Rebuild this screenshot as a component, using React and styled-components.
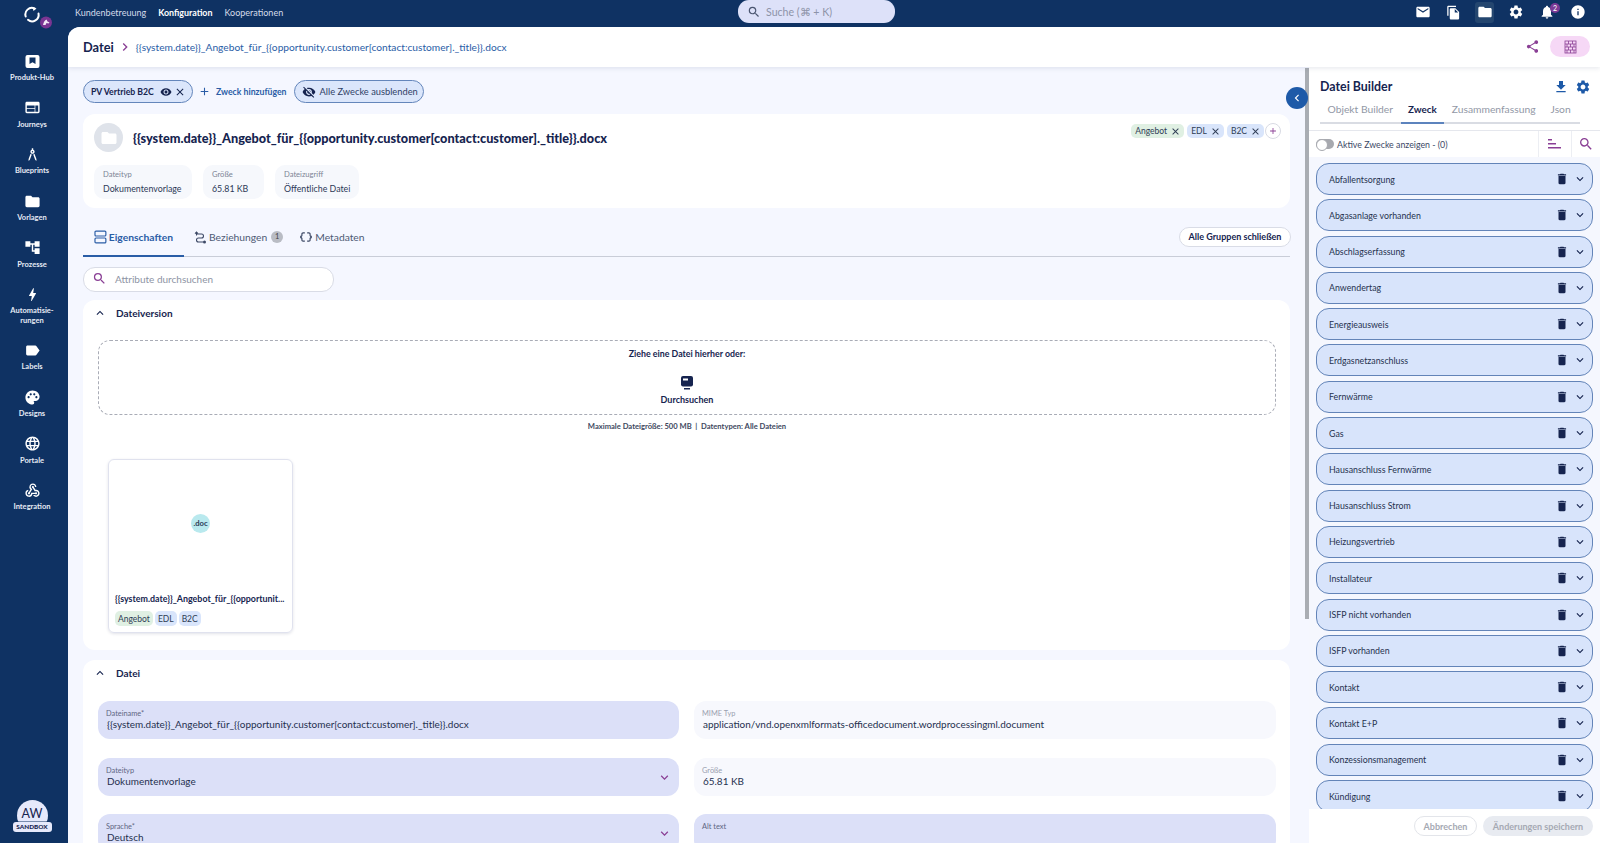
import React from "react";
import styled, { createGlobalStyle } from "styled-components";
import {
  MdAccountTree,
  MdAdd,
  MdArchitecture,
  MdBolt,
  MdClose,
  MdDataObject,
  MdDelete,
  MdEmail,
  MdExpandLess,
  MdExpandMore,
  MdFileCopy,
  MdFileDownload,
  MdFolder,
  MdInfo,
  MdLabel,
  MdLanguage,
  MdNotifications,
  MdPalette,
  MdSearch,
  MdSettings,
  MdShare,
  MdVisibility,
  MdVisibilityOff,
  MdWeb,
  MdWebhook,
  MdChevronLeft,
  MdChevronRight,
} from "react-icons/md";

const navy = "#0f3263";
const ink = "#16244f";
const blue = "#2a5da6";
const plum = "#8a3f95";

const GlobalStyle = createGlobalStyle`
  html, body { margin: 0; height: 100%; overflow: hidden; }
  body { font-family: "Lato", "Liberation Sans", sans-serif; color: ${ink}; }
  * { box-sizing: border-box; }
`;

const Shell = styled.div`
  display: flex;
  width: 1600px;
  height: 843px;
  background: ${navy};
  overflow: hidden;
`;

/* left rail */
const Rail = styled.aside`
  width: 68px;
  flex: none;
  display: flex;
  flex-direction: column;
  align-items: center;
  color: #fff;
`;
const LogoBox = styled.div`
  height: 51px;
  width: 100%;
  padding: 6px 0 0 22px;
`;
const RailNav = styled.nav`
  display: flex;
  flex-direction: column;
  gap: 15.55px;
  width: 100%;
  padding-right: 4px;
`;
const RailItem = styled.a`
  display: flex;
  flex-direction: column;
  align-items: center;
  font-size: 7.5px;
  font-weight: 700;
  line-height: 9.3px;
  text-align: center;
  color: #e6ebf5;
  svg { display: block; margin: 1.5px 0 3.35px; }
`;
const Profile = styled.div`
  margin: auto 4px 11px 0;
  display: flex;
  flex-direction: column;
  align-items: center;
`;
const Avatar = styled.div`
  width: 31px;
  height: 31px;
  border-radius: 50%;
  background: #e6e9fb;
  color: ${ink};
  font-size: 12.5px;
  display: flex;
  align-items: center;
  justify-content: center;
  padding-bottom: 4px;
`;
const SandboxBadge = styled.div`
  margin-top: -9px;
  z-index: 1;
  width: 39px;
  height: 10px;
  border-radius: 3px;
  background: #e6e9fb;
  color: ${ink};
  font-size: 6.4px;
  font-weight: 900;
  line-height: 10px;
  text-align: center;
  box-shadow: 0 0 0 0.5px #0f3263;
`;

/* top bar */
const Main = styled.div`
  flex: 1;
  min-width: 0;
  display: flex;
  flex-direction: column;
`;
const TopBar = styled.header`
  height: 27px;
  flex: none;
  display: flex;
  align-items: flex-start;
  position: relative;
  padding-left: 7px;
`;
const TopLinks = styled.div`
  display: flex;
  gap: 12px;
  height: 24px;
  align-items: center;
`;
const TopLink = styled.a`
  font-size: ${(p) => (p.$active ? 8.9 : 9)}px;
  font-weight: ${(p) => (p.$active ? 700 : 400)};
  color: ${(p) => (p.$active ? "#fff" : "#d5dcea")};
`;
const GlobalSearch = styled.div`
  position: absolute;
  left: 670px;
  top: 0;
  width: 157px;
  height: 23px;
  background: #dde1f9;
  border-radius: 11px;
  display: flex;
  align-items: center;
  padding-left: 9px;
  gap: 5px;
  font-size: 10.6px;
  color: #8d93a8;
  svg { color: #4a5570; }
`;
const TopIcons = styled.div`
  margin-left: auto;
  display: flex;
  align-items: center;
  height: 24px;
  gap: 12px;
  padding-right: 13px;
`;
const TopIcon = styled.span`
  width: 19px;
  height: 21px;
  display: flex;
  align-items: center;
  justify-content: center;
  position: relative;
  border-radius: 3px;
  color: #fff;
  background: ${(p) => (p.$active ? "#24466f" : "transparent")};
`;
const BellBadge = styled.span`
  position: absolute;
  left: 13px;
  top: 1px;
  width: 10px;
  height: 10px;
  border-radius: 50%;
  background: #7b3a96;
  font-size: 7px;
  line-height: 10px;
  text-align: center;
`;

/* workspace */
const Workspace = styled.div`
  flex: 1;
  min-height: 0;
  display: flex;
  flex-direction: column;
  background: #f5f7ff;
  border-top-left-radius: 12px;
  overflow: hidden;
`;
const PageHeader = styled.div`
  height: 40px;
  flex: none;
  background: #fff;
  display: flex;
  align-items: center;
  padding: 0 10px 1px 15px;
  box-shadow: 0 1px 5px rgba(30, 50, 90, 0.12);
  z-index: 2;
`;
const PageTitle = styled.span`
  font-size: 12.8px;
  font-weight: 700;
  color: ${ink};
`;
const Crumb = styled.span`
  display: flex;
  color: ${plum};
  margin: 0 3px 0 3px;
`;
const CrumbLink = styled.a`
  font-size: 10.2px;
  color: ${blue};
`;
const HeaderActions = styled.div`
  margin-left: auto;
  display: flex;
  align-items: center;
  gap: 10px;
  color: ${plum};
`;
const GridPill = styled.span`
  width: 40px;
  height: 21px;
  border-radius: 11px;
  background: #f6d8f6;
  display: flex;
  align-items: center;
  justify-content: center;
`;
const Body = styled.div`
  flex: 1;
  min-height: 0;
  display: flex;
`;
const Content = styled.main`
  flex: 1;
  min-width: 0;
  position: relative;
  padding: 13px 19px 0 15px;
  overflow: hidden;
`;
const ScrollThumb = styled.div`
  position: absolute;
  right: 0;
  top: 1px;
  width: 4px;
  height: 551px;
  background: #a9adb3;
`;
const CollapseButton = styled.button`
  position: absolute;
  right: 1px;
  top: 20px;
  width: 22px;
  height: 22px;
  border: 0;
  padding: 0;
  border-radius: 50%;
  background: #1e5aa8;
  color: #fff;
  display: flex;
  align-items: center;
  justify-content: center;
`;

/* purpose row */
const PurposeRow = styled.div`
  display: flex;
  align-items: center;
  height: 23px;
  margin-bottom: 11px;
`;
const PurposePill = styled.div`
  height: 23px;
  flex: none;
  display: flex;
  align-items: center;
  white-space: nowrap;
  border-radius: 12px;
  background: #dbe6fb;
  border: 1px solid #6486bb;
  color: ${ink};
  font-size: 9.3px;
`;
const ActivePill = styled(PurposePill)`
  width: 110px;
  padding-left: 7px;
  font-size: 8.7px;
  font-weight: 700;
  svg:first-of-type { margin-left: 6px; }
  svg:last-of-type { margin-left: 2px; }
`;
const HidePill = styled(PurposePill)`
  width: 130px;
  padding-left: 7px;
  gap: 4px;
  color: #2f3f66;
  svg { color: ${ink}; }
`;
const AddPurpose = styled.a`
  display: flex;
  align-items: center;
  gap: 5px;
  margin: 0 7px 0 5px;
  color: ${blue};
  font-size: 8.7px;
  font-weight: 700;
  white-space: nowrap;
`;

/* file card */
const FileCard = styled.section`
  height: 94px;
  background: #fff;
  border-radius: 12px;
  padding: 9px 9px 0 10px;
  position: relative;
`;
const FileHead = styled.div`
  display: flex;
  align-items: center;
  gap: 10px;
  height: 29px;
  padding-left: 1px;
`;
const FileBubble = styled.div`
  width: 29px;
  height: 29px;
  border-radius: 50%;
  background: #dfe3ea;
  color: #fff;
  display: flex;
  align-items: center;
  justify-content: center;
`;
const FileTitle = styled.h1`
  margin: 0;
  font-size: 12.7px;
  font-weight: 900;
  color: ${ink};
`;
const MetaRow = styled.div`
  display: flex;
  gap: 11px;
  margin-top: 13px;
  padding-left: 1px;
`;
const MetaChip = styled.div`
  height: 34px;
  width: ${(p) => p.$w}px;
  border-radius: 10px;
  background: #f6f8fc;
  padding: 4px 0 0 9px;
`;
const MetaLabel = styled.div`
  font-size: 7.6px;
  line-height: 10px;
  color: #7d8496;
`;
const MetaValue = styled.div`
  font-size: 8.8px;
  line-height: 12px;
  margin-top: 4px;
  color: #2c3857;
`;
const TagRow = styled.div`
  position: absolute;
  right: 9px;
  top: 9px;
  display: flex;
  align-items: center;
  gap: 3px;
`;
const Tag = styled.span`
  height: ${(p) => (p.$small ? 15 : 14)}px;
  padding: 0 3px 0 ${(p) => (p.$small ? 3 : 4)}px;
  border-radius: 5px;
  background: ${(p) => (p.$green ? "#e0f0e3" : "#d9e5fb")};
  color: #2e3d55;
  font-size: 8.5px;
  display: inline-flex;
  align-items: center;
  gap: 3px;
`;
const TagAdd = styled.span`
  width: 16px;
  height: 16px;
  margin-left: -2px;
  border-radius: 50%;
  border: 1px solid #d8dae3;
  background: #fff;
  color: ${plum};
  display: flex;
  align-items: center;
  justify-content: center;
`;
const DocTagRow = styled.div`
  display: flex;
  gap: 2px;
  margin: 7px 0 6px;
`;

/* tabs */
const TabBar = styled.div`
  margin-top: 14px;
  height: 34.5px;
  display: flex;
  align-items: stretch;
  border-bottom: 1px solid #c9cdd8;
`;
const Tab = styled.a`
  display: flex;
  align-items: center;
  gap: 2px;
  padding: 0 ${(p) => p.$pad || 0}px 2px;
  margin-bottom: -1px;
  font-size: 10.3px;
  width: ${(p) => (p.$w ? `${p.$w}px` : "auto")};
  font-weight: ${(p) => (p.$active ? 700 : 400)};
  color: ${(p) => (p.$active ? blue : "#4e5a75")};
  border-bottom: 2px solid ${(p) => (p.$active ? blue : "transparent")};
  svg { color: ${(p) => (p.$active ? blue : "#3d4966")}; }
`;
const CountBadge = styled.span`
  width: 12px;
  height: 12px;
  border-radius: 50%;
  background: #b9bcc4;
  color: #444;
  font-size: 7.5px;
  line-height: 12px;
  text-align: center;
  margin-left: 2px;
`;
const CloseGroups = styled.button`
  margin: 5px -1px 9px auto;
  width: 112px;
  border: 1px solid #d9dce6;
  border-radius: 11px;
  background: #fff;
  color: ${ink};
  font: 700 9px "Lato", sans-serif;
  padding: 0;
`;
const AttrSearch = styled.div`
  margin-top: 10.5px;
  width: 251px;
  height: 25px;
  background: #fff;
  border: 1px solid #d9dce6;
  border-radius: 12px;
  display: flex;
  align-items: center;
  gap: 8px;
  padding: 0 0 2px 8px;
  color: #8e94a4;
  font-size: 10px;
  svg { color: ${plum}; }
`;

/* sections */
const Section = styled.section`
  background: #fff;
  border-radius: 12px;
  margin-top: ${(p) => p.$mt}px;
  padding: 0 14px ${(p) => p.$pb || 0}px 15px;
`;
const SectionHead = styled.div`
  height: 26px;
  display: flex;
  align-items: center;
  gap: 9px;
  padding-bottom: 1px;
  font-size: 10px;
  font-weight: 700;
  color: ${ink};
  svg { margin-left: -5px; }
`;
const DropZone = styled.div`
  margin-top: 14px;
  height: 75px;
  border: 1px dashed #a9acb6;
  border-radius: 12px;
  display: flex;
  flex-direction: column;
  align-items: center;
  padding-top: 8px;
  font-weight: 700;
`;
const DropTitle = styled.div`
  font-size: 8.8px;
  line-height: 10px;
`;
const BrowseIcon = styled.svg`
  margin-top: 17px;
`;
const BrowseLabel = styled.div`
  font-size: 9px;
  line-height: 11px;
  margin-top: 4px;
`;
const DropHint = styled.div`
  margin-top: 6px;
  font-size: 7.6px;
  font-weight: 700;
  line-height: 10px;
  color: #3e4860;
  text-align: center;
`;
const DocCard = styled.div`
  margin: 28px 0 0 10px;
  width: 185px;
  height: 174px;
  border: 1px solid #e0e2ee;
  border-radius: 6px;
  box-shadow: 0 1px 3px rgba(40, 50, 90, 0.14);
  padding: 0 6px;
  display: flex;
  flex-direction: column;
`;
const DocPreview = styled.div`
  flex: 1;
  display: flex;
  align-items: center;
  justify-content: center;
  padding-bottom: 6px;
`;
const DocBadge = styled.span`
  width: 19px;
  height: 19px;
  border-radius: 50%;
  background: #b9e9ee;
  font-size: 7.6px;
  font-weight: 700;
  line-height: 19px;
  text-align: center;
  color: #2a3b55;
`;
const DocName = styled.div`
  font-size: 8.9px;
  font-weight: 700;
  line-height: 11px;
  white-space: nowrap;
`;

/* form */
const FieldGrid = styled.div`
  margin-top: 15px;
  display: grid;
  grid-template-columns: 581px 582px;
  column-gap: 15px;
  row-gap: 18.5px;
`;
const Field = styled.div`
  height: 38px;
  border-radius: 12px;
  background: ${(p) => (p.$readonly ? "#f7f8fd" : "#dce0f8")};
  padding: 8px 9px 0 8px;
  position: relative;
`;
const FieldLabel = styled.div`
  font-size: 7.4px;
  line-height: 9px;
  color: ${(p) => (p.$readonly ? "#9aa0b0" : "#5e6682")};
`;
const FieldValue = styled.div`
  font-size: 9.95px;
  line-height: 13px;
  margin: 0 0 0 1px;
  color: #25304f;
`;
const FieldChevron = styled.span`
  position: absolute;
  right: 7px;
  top: 12px;
  display: flex;
  color: ${plum};
`;

/* builder panel */
const Builder = styled.aside`
  width: 291px;
  flex: none;
  background: #fff;
  display: flex;
  flex-direction: column;
  min-height: 0;
`;
const BuilderHead = styled.div`
  height: 33px;
  flex: none;
  display: flex;
  align-items: flex-start;
  padding: 12px 9px 0 11px;
`;
const BuilderTitle = styled.h2`
  margin: 0;
  font-size: 12.4px;
  line-height: 16px;
  font-weight: 700;
  color: ${ink};
`;
const BuilderActions = styled.div`
  margin-left: auto;
  display: flex;
  gap: 6px;
  color: #1e5aa8;
`;
const BuilderTabs = styled.div`
  margin: 0 20px 0 11px;
  height: 24px;
  flex: none;
  display: flex;
  border-bottom: 2px solid #d9dce3;
  padding-top: 2px;
`;
const BuilderTab = styled.a`
  padding: 0 7.5px 5px;
  margin-bottom: -2px;
  font-size: ${(p) => (p.$active ? 9.8 : 10.3)}px;
  line-height: 15px;
  white-space: nowrap;
  font-weight: ${(p) => (p.$active ? 700 : 400)};
  color: ${(p) => (p.$active ? ink : "#9298a6")};
  border-bottom: 2px solid ${(p) => (p.$active ? "#5c83bd" : "transparent")};
`;
const FilterRow = styled.div`
  margin-top: 6px;
  height: 27px;
  flex: none;
  display: flex;
  align-items: center;
  border-top: 1px solid #e5e7ed;
  padding-left: 7px;
  font-size: 8.8px;
  color: #3c4866;
  gap: 3px;
`;
const Toggle = styled.span`
  width: 18px;
  height: 10px;
  border-radius: 5px;
  background: #a7a9af;
  position: relative;
  &::after {
    content: "";
    position: absolute;
    left: 0;
    top: 0;
    width: 10px;
    height: 10px;
    border-radius: 50%;
    background: #fff;
    border: 1px solid #a7a9af;
  }
`;
const FilterButton = styled.span`
  width: ${(p) => p.$w}px;
  height: 26px;
  display: flex;
  align-items: center;
  justify-content: center;
  color: ${plum};
  border-left: 1px solid #eceef3;
  padding-left: ${(p) => p.$inset || 0}px;
  margin-left: ${(p) => (p.$auto ? "auto" : 0)};
`;
const PurposeList = styled.div`
  flex: 1;
  min-height: 0;
  background: #f5f7fe;
  padding: 6px 7px 0;
  display: flex;
  flex-direction: column;
  gap: 4.3px;
  overflow: hidden;
`;
const PurposeItem = styled.div`
  flex: none;
  height: 32px;
  border: 1px solid #6384b8;
  border-radius: 13px;
  background: #d8e4fb;
  display: flex;
  align-items: center;
  padding: 0 5px 0 12px;
  font-size: 8.8px;
  color: #26324f;
  gap: 4px;
  span { margin-right: auto; }
  svg { color: ${ink}; }
`;
const BuilderFooter = styled.div`
  height: 34px;
  flex: none;
  background: #fff;
  display: flex;
  justify-content: flex-end;
  align-items: center;
  gap: 6px;
  padding-right: 7px;
`;
const GhostButton = styled.button`
  height: 20px;
  border: 1px solid #e3e5ea;
  background: #fff;
  border-radius: 10px;
  color: #a5a9b3;
  font: 700 9px "Lato", sans-serif;
  width: 63px;
  padding: 0;
`;
const SaveButton = styled(GhostButton)`
  border: 0;
  background: #e8ebf1;
  width: 110px;
`;

function HubIcon({ size }) {
  return (
    <svg width={size} height={size} viewBox="1.500 1.500 17 17">
      <path
        fill="#fff"
        fillRule="evenodd"
        d="M5 3.500h10a2 2 0 0 1 2 2v9a2 2 0 0 1-2 2H5a2 2 0 0 1-2-2v-9a2 2 0 0 1 2-2zM7 6v6.500l3-1.800 3 1.800V6z"
      />
    </svg>
  );
}

function Logo() {
  return (
    <svg width="36" height="30" viewBox="0 0 36 30">
      <path d="M3.700 10.500A6.500 6.500 0 0 1 12.500 2.500" fill="none" stroke="#fff" strokeWidth="2" strokeLinecap="round" />
      <path d="M16.500 7.500A6.500 6.500 0 0 1 6 13.800" fill="none" stroke="#fff" strokeWidth="2" strokeLinecap="round" />
      <path d="M10.500 1l4 1.500-3 2.500z" fill="#fff" />
      <circle cx="24" cy="16.500" r="6" fill="#7a3592" />
      <path d="M21 19c.5-3 2-5 3.500-5.500l1 2 2 1-1 1-2-.5-1 2z" fill="#f4e8f6" />
    </svg>
  );
}

function BrickIcon() {
  return (
    <svg width="13" height="14" viewBox="0 0 13 14" fill="none" stroke={plum} strokeWidth="0.8">
      <rect x="1" y="1" width="11" height="12" />
      <path d="M1 4h11M1 7h11M1 10h11M4.500 1v3M8.500 1v3M3 4v3M6.500 4v3M10 4v3M4.500 7v3M8.500 7v3M3 10v3M6.500 10v3M10 10v3" />
    </svg>
  );
}

function StackIcon() {
  return (
    <svg width="13" height="14" viewBox="0 0 13 14" fill="none" stroke="currentColor" strokeWidth="1.200">
      <rect x="1" y="1" width="11" height="5" rx="1" />
      <rect x="1" y="8" width="11" height="5" rx="1" />
    </svg>
  );
}

function RelationIcon() {
  return (
    <svg width="13" height="13" viewBox="0 0 13 13" fill="none" stroke="currentColor" strokeWidth="1.100">
      <path d="M2.500 1v3.500M1 2.600l1.500-1.600 1.500 1.600" />
      <path d="M2.500 3h5a2 2 0 0 1 0 4h-3a2 2 0 0 0 0 4h5" />
      <circle cx="10.500" cy="11" r="1.500" fill="currentColor" stroke="none" />
    </svg>
  );
}

function SortIcon() {
  return (
    <svg width="14" height="12" viewBox="0 0 14 12" fill="currentColor">
      <rect x="0" y="1" width="4" height="1.500" />
      <rect x="0" y="5" width="8" height="1.500" />
      <rect x="0" y="9" width="13" height="1.500" />
    </svg>
  );
}

const railItems = [
  { label: "Produkt-Hub", Icon: HubIcon },
  { label: "Journeys", Icon: MdWeb },
  { label: "Blueprints", Icon: MdArchitecture },
  { label: "Vorlagen", Icon: MdFolder },
  { label: "Prozesse", Icon: MdAccountTree },
  { label: ["Automatisie-", "rungen"], Icon: MdBolt },
  { label: "Labels", Icon: MdLabel },
  { label: "Designs", Icon: MdPalette },
  { label: "Portale", Icon: MdLanguage },
  { label: "Integration", Icon: MdWebhook },
];

const purposes = [
  "Abfallentsorgung",
  "Abgasanlage vorhanden",
  "Abschlagserfassung",
  "Anwendertag",
  "Energieausweis",
  "Erdgasnetzanschluss",
  "Fernwärme",
  "Gas",
  "Hausanschluss Fernwärme",
  "Hausanschluss Strom",
  "Heizungsvertrieb",
  "Installateur",
  "ISFP nicht vorhanden",
  "ISFP vorhanden",
  "Kontakt",
  "Kontakt E+P",
  "Konzessionsmanagement",
  "Kündigung",
];

const fileTitle = "{{system.date}}_Angebot_für_{{opportunity.customer[contact:customer]._title}}.docx";

export default function App() {
  return (
    <Shell>
      <GlobalStyle />
      <Rail>
        <LogoBox>
          <Logo />
        </LogoBox>
        <RailNav>
          {railItems.map(({ label, Icon }) => (
            <RailItem key={String(label)}>
              <Icon size={17} color="#fff" />
              {Array.isArray(label) ? label.map((l) => <div key={l}>{l}</div>) : label}
            </RailItem>
          ))}
        </RailNav>
        <Profile>
          <Avatar>AW</Avatar>
          <SandboxBadge>SANDBOX</SandboxBadge>
        </Profile>
      </Rail>

      <Main>
        <TopBar>
          <TopLinks>
            <TopLink>Kundenbetreuung</TopLink>
            <TopLink $active>Konfiguration</TopLink>
            <TopLink>Kooperationen</TopLink>
          </TopLinks>
          <GlobalSearch>
            <MdSearch size={14} />
            Suche (⌘ + K)
          </GlobalSearch>
          <TopIcons>
            <TopIcon><MdEmail size={16} /></TopIcon>
            <TopIcon><MdFileCopy size={15} /></TopIcon>
            <TopIcon $active><MdFolder size={16} /></TopIcon>
            <TopIcon><MdSettings size={16} /></TopIcon>
            <TopIcon>
              <MdNotifications size={16} />
              <BellBadge>2</BellBadge>
            </TopIcon>
            <TopIcon><MdInfo size={16} /></TopIcon>
          </TopIcons>
        </TopBar>

        <Workspace>
          <PageHeader>
            <PageTitle>Datei</PageTitle>
            <Crumb><MdChevronRight size={16} /></Crumb>
            <CrumbLink>{fileTitle}</CrumbLink>
            <HeaderActions>
              <MdShare size={15} />
              <GridPill><BrickIcon /></GridPill>
            </HeaderActions>
          </PageHeader>

          <Body>
            <Content>
              <ScrollThumb />
              <CollapseButton><MdChevronLeft size={14} /></CollapseButton>

              <PurposeRow>
                <ActivePill>
                  PV Vertrieb B2C
                  <MdVisibility size={12} />
                  <MdClose size={12} />
                </ActivePill>
                <AddPurpose>
                  <MdAdd size={13} />
                  Zweck hinzufügen
                </AddPurpose>
                <HidePill>
                  <MdVisibilityOff size={14} />
                  Alle Zwecke ausblenden
                </HidePill>
              </PurposeRow>

              <FileCard>
                <FileHead>
                  <FileBubble><MdFolder size={18} /></FileBubble>
                  <FileTitle>{fileTitle}</FileTitle>
                </FileHead>
                <MetaRow>
                  <MetaChip $w={98}>
                    <MetaLabel>Dateityp</MetaLabel>
                    <MetaValue>Dokumentenvorlage</MetaValue>
                  </MetaChip>
                  <MetaChip $w={61}>
                    <MetaLabel>Größe</MetaLabel>
                    <MetaValue>65.81 KB</MetaValue>
                  </MetaChip>
                  <MetaChip $w={84}>
                    <MetaLabel>Dateizugriff</MetaLabel>
                    <MetaValue>Öffentliche Datei</MetaValue>
                  </MetaChip>
                </MetaRow>
                <TagRow>
                  <Tag $green>Angebot <MdClose size={11} /></Tag>
                  <Tag>EDL <MdClose size={11} /></Tag>
                  <Tag>B2C <MdClose size={11} /></Tag>
                  <TagAdd><MdAdd size={10} /></TagAdd>
                </TagRow>
              </FileCard>

              <TabBar>
                <Tab $active $pad={11} $w={101}>
                  <StackIcon />
                  Eigenschaften
                </Tab>
                <Tab $pad={10}>
                  <RelationIcon />
                  Beziehungen
                  <CountBadge>1</CountBadge>
                </Tab>
                <Tab $pad={6}>
                  <MdDataObject size={14} />
                  Metadaten
                </Tab>
                <CloseGroups>Alle Gruppen schließen</CloseGroups>
              </TabBar>

              <AttrSearch>
                <MdSearch size={15} />
                Attribute durchsuchen
              </AttrSearch>

              <Section $mt={8} $pb={17}>
                <SectionHead>
                  <MdExpandLess size={14} />
                  Dateiversion
                </SectionHead>
                <DropZone>
                  <DropTitle>Ziehe eine Datei hierher oder:</DropTitle>
                  <BrowseIcon width="14" height="14" viewBox="0 0 14 14">
                    <rect x="1" y="0" width="12" height="10.500" rx="2" fill={ink} />
                    <rect x="3" y="2.500" width="5" height="2" fill="#fff" />
                    <rect x="4" y="12" width="6" height="1.500" fill={ink} />
                  </BrowseIcon>
                  <BrowseLabel>Durchsuchen</BrowseLabel>
                </DropZone>
                <DropHint>Maximale Dateigröße: 500 MB &nbsp;|&nbsp; Datentypen: Alle Dateien</DropHint>
                <DocCard>
                  <DocPreview><DocBadge>.doc</DocBadge></DocPreview>
                  <DocName>{"{{system.date}}_Angebot_für_{{opportunit..."}</DocName>
                  <DocTagRow>
                    <Tag $green $small>Angebot</Tag>
                    <Tag $small>EDL</Tag>
                    <Tag $small>B2C</Tag>
                  </DocTagRow>
                </DocCard>
              </Section>

              <Section $mt={10} $pb={20}>
                <SectionHead>
                  <MdExpandLess size={14} />
                  Datei
                </SectionHead>
                <FieldGrid>
                  <Field>
                    <FieldLabel>Dateiname*</FieldLabel>
                    <FieldValue>{fileTitle}</FieldValue>
                  </Field>
                  <Field $readonly>
                    <FieldLabel $readonly>MIME Typ</FieldLabel>
                    <FieldValue>application/vnd.openxmlformats-officedocument.wordprocessingml.document</FieldValue>
                  </Field>
                  <Field>
                    <FieldLabel>Dateityp</FieldLabel>
                    <FieldValue>Dokumentenvorlage</FieldValue>
                    <FieldChevron><MdExpandMore size={15} /></FieldChevron>
                  </Field>
                  <Field $readonly>
                    <FieldLabel $readonly>Größe</FieldLabel>
                    <FieldValue>65.81 KB</FieldValue>
                  </Field>
                  <Field>
                    <FieldLabel>Sprache*</FieldLabel>
                    <FieldValue>Deutsch</FieldValue>
                    <FieldChevron><MdExpandMore size={15} /></FieldChevron>
                  </Field>
                  <Field>
                    <FieldLabel>Alt text</FieldLabel>
                  </Field>
                </FieldGrid>
              </Section>
            </Content>

            <Builder>
              <BuilderHead>
                <BuilderTitle>Datei Builder</BuilderTitle>
                <BuilderActions>
                  <MdFileDownload size={16} />
                  <MdSettings size={16} />
                </BuilderActions>
              </BuilderHead>
              <BuilderTabs>
                <BuilderTab>Objekt Builder</BuilderTab>
                <BuilderTab $active>Zweck</BuilderTab>
                <BuilderTab>Zusammenfassung</BuilderTab>
                <BuilderTab>Json</BuilderTab>
              </BuilderTabs>
              <FilterRow>
                <Toggle />
                Aktive Zwecke anzeigen - (0)
                <FilterButton $auto $w={30} $inset={3}><SortIcon /></FilterButton>
                <FilterButton $w={29}><MdSearch size={16} /></FilterButton>
              </FilterRow>
              <PurposeList>
                {purposes.map((name) => (
                  <PurposeItem key={name}>
                    <span>{name}</span>
                    <MdDelete size={14} />
                    <MdExpandMore size={14} />
                  </PurposeItem>
                ))}
              </PurposeList>
              <BuilderFooter>
                <GhostButton>Abbrechen</GhostButton>
                <SaveButton>Änderungen speichern</SaveButton>
              </BuilderFooter>
            </Builder>
          </Body>
        </Workspace>
      </Main>
    </Shell>
  );
}
